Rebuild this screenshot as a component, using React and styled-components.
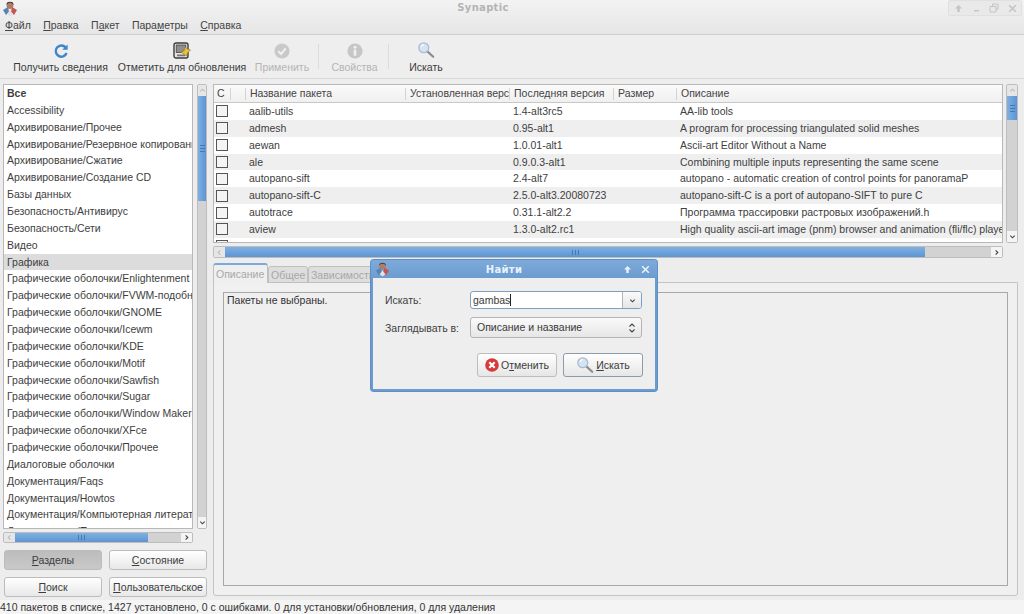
import React from "react";
import styled, { createGlobalStyle } from "styled-components";

const sections = [
  "Все", "Accessibility", "Архивирование/Прочее", "Архивирование/Резервное копирование",
  "Архивирование/Сжатие", "Архивирование/Создание CD", "Базы данных", "Безопасность/Антивирус",
  "Безопасность/Сети", "Видео", "Графика", "Графические оболочки/Enlightenment",
  "Графические оболочки/FVWM-подобные", "Графические оболочки/GNOME", "Графические оболочки/Icewm",
  "Графические оболочки/KDE", "Графические оболочки/Motif", "Графические оболочки/Sawfish",
  "Графические оболочки/Sugar", "Графические оболочки/Window Maker", "Графические оболочки/XFce",
  "Графические оболочки/Прочее", "Диалоговые оболочки", "Документация/Faqs", "Документация/Howtos",
  "Документация/Компьютерная литература", "Документация/Прочее",
];

const packages = [
  ["aalib-utils", "1.4-alt3rc5", "AA-lib tools"],
  ["admesh", "0.95-alt1", "A program for processing triangulated solid meshes"],
  ["aewan", "1.0.01-alt1", "Ascii-art Editor Without a Name"],
  ["ale", "0.9.0.3-alt1", "Combining multiple inputs representing the same scene"],
  ["autopano-sift", "2.4-alt7", "autopano - automatic creation of control points for panoramaP"],
  ["autopano-sift-C", "2.5.0-alt3.20080723", "autopano-sift-C is a port of autopano-SIFT to pure C"],
  ["autotrace", "0.31.1-alt2.2", "Программа трассировки растровых изображений.h"],
  ["aview", "1.3.0-alt2.rc1", "High quality ascii-art image (pnm) browser and animation (fli/flc) player"],
  ["", "", ""],
];

const columns = [
  { title: "С", width: 16 },
  { title: "", width: 15 },
  { title: "Название пакета", width: 160 },
  { title: "Установленная версия", width: 104 },
  { title: "Последняя версия", width: 104 },
  { title: "Размер", width: 63 },
  { title: "Описание", width: 326 },
];

const GlobalStyle = createGlobalStyle`
  html, body { margin: 0; padding: 0; background: #ededed; }
  body { font-family: "Liberation Sans", Arial, sans-serif; font-size: 10.5px; color: #3a3a3a; }
  u { text-underline-offset: 1px; }
`;

const Page = styled.div`
  width: 1024px;
  height: 614px;
  position: relative;
  display: flex;
  flex-direction: column;
  overflow: hidden;
  background: #ededed;
`;

const TitleBar = styled.div`
  height: 18px;
  flex: none;
  display: flex;
  align-items: flex-start;
  padding: 1px 2px 0 2px;
  box-sizing: border-box;
  background: linear-gradient(#f3f3f3, #ececec);
`;

const TitleText = styled.div`
  flex: 1;
  text-align: center;
  font-family: "DejaVu Sans", sans-serif;
  font-size: 10px;
  line-height: 14px;
  font-weight: 700;
  letter-spacing: 0.3px;
  color: #b4b4b4;
`;

const WinButtons = styled.div`
  display: flex;
  margin-top: -1px;
  border: 1px solid #e0e0e0;
  border-radius: 2px;
  height: 14px;
  background: #e9e9e9;
`;

const WinButton = styled.div`
  width: 18px;
  display: flex;
  align-items: center;
  justify-content: center;
  color: ${(p) => p.$color || "#c4c4c4"};
  svg { display: block; }
`;

const MenuBar = styled.div`
  height: 17px;
  box-sizing: border-box;
  flex: none;
  display: flex;
  align-items: center;
  gap: 12.4px;
  padding: 0 5px 2px;
  background: linear-gradient(#ececec, #e6e6e6);
  border-bottom: 1px solid #cfcfcf;
  color: #444;
`;

const Toolbar = styled.div`
  height: 44px;
  box-sizing: border-box;
  flex: none;
  display: flex;
  align-items: stretch;
  padding-left: 8px;
  position: relative;
  background: #eeeeee;
  border-bottom: 1px solid #d8d8d8;
`;

const Grip = styled.div`
  position: absolute;
  left: 1px;
  top: 14px;
  width: 4px;
  height: 18px;
  background-image: radial-gradient(#c4c4c4 35%, transparent 40%);
  background-size: 2px 2px;
`;

const PaneGrip = styled(Grip)`
  left: 208px;
  top: 322px;
  height: 14px;
`;

const ToolItem = styled.div`
  width: ${(p) => p.$width}px;
  display: flex;
  flex-direction: column;
  align-items: center;
  justify-content: flex-end;
  padding-bottom: 5px;
  gap: 2px;
  white-space: nowrap;
  color: ${(p) => (p.$disabled ? "#b5b5b5" : "#3c3c3c")};
  svg { display: block; }
`;

const ToolSep = styled.div`
  width: 1px;
  margin: 9px ${(p) => p.$right || 0}px 9px ${(p) => p.$left || 0}px;
  background: #dcdcdc;
`;

const Main = styled.div`
  flex: 1;
  min-height: 0;
  display: flex;
  padding: 5px 6px 4px 3px;
  gap: 6px;
  position: relative;
`;

const LeftColumn = styled.div`
  width: 204px;
  flex: none;
  display: flex;
  flex-direction: column;
`;

const ListRow = styled.div`
  display: flex;
  gap: 4px;
  height: 445px;
  flex: none;
`;

const SectionList = styled.div`
  width: 190px;
  box-sizing: border-box;
  background: #fff;
  border: 1px solid #b8b8b8;
  overflow: hidden;
`;

const SectionItem = styled.div`
  height: 16.87px;
  line-height: 16.87px;
  padding-left: 3px;
  white-space: nowrap;
  overflow: hidden;
  color: #3e3e3e;
  font-weight: ${(p) => (p.$bold ? 700 : 400)};
  background: ${(p) => (p.$selected ? "#dcdcdc" : "transparent")};
`;

const VScroll = styled.div`
  width: ${(p) => p.$width}px;
  flex: none;
  box-sizing: border-box;
  display: flex;
  flex-direction: column;
  background: #d2d2d2;
  border: 1px solid #bdbdbd;
  border-radius: 2px;
`;

const HScroll = styled.div`
  height: ${(p) => p.$height}px;
  box-sizing: border-box;
  display: flex;
  background: #d2d2d2;
  border: 1px solid #bdbdbd;
  border-radius: 2px;
  width: ${(p) => p.$width}px;
  margin-top: 3px;
  flex: none;
`;

const ScrollArrow = styled.div`
  flex: none;
  width: ${(p) => (p.$horizontal ? "11px" : "100%")};
  height: ${(p) => (p.$horizontal ? "100%" : "11px")};
  display: flex;
  align-items: center;
  justify-content: center;
  background: ${(p) => (p.$dim ? "#e6e6e6" : "#f4f4f4")};
  color: ${(p) => (p.$dim ? "#bdbdbd" : "#444")};
  svg { display: block; }
`;

const VThumb = styled.div`
  height: ${(p) => p.$size}px;
  flex: none;
  display: flex;
  align-items: center;
  justify-content: center;
  background: linear-gradient(90deg, #7fb0e2, #5d95d2);
`;

const HThumb = styled.div`
  width: ${(p) => p.$size}px;
  flex: none;
  display: flex;
  align-items: center;
  justify-content: center;
  background: linear-gradient(#7fb0e2, #5d95d2);
`;

const ThumbMark = styled.div`
  width: ${(p) => (p.$horizontal ? "7px" : "5px")};
  height: ${(p) => (p.$horizontal ? "5px" : "7px")};
  background-image: repeating-linear-gradient(
    ${(p) => (p.$horizontal ? "90deg" : "0deg")},
    #4379b4 0 1px,
    transparent 1px 3px
  );
`;

const ScrollRest = styled.div`
  flex: 1;
`;

const ButtonGrid = styled.div`
  display: grid;
  grid-template-columns: 98px 98px;
  column-gap: 7px;
  row-gap: 7px;
  margin: 7px 0 0 1px;
`;

const SideButton = styled.div`
  height: 20px;
  box-sizing: border-box;
  display: flex;
  align-items: center;
  justify-content: center;
  border: 1px solid #bcbcbc;
  border-radius: 3px;
  white-space: nowrap;
  color: #3c3c3c;
  background: ${(p) => (p.$active ? "linear-gradient(#bcbcbc, #c9c9c9)" : "linear-gradient(#fff, #e8e8e8)")};
`;

const RightColumn = styled.div`
  flex: 1;
  min-width: 0;
  display: flex;
  flex-direction: column;
`;

const TreeRow = styled.div`
  display: flex;
  gap: 3px;
  height: 159px;
  flex: none;
`;

const Tree = styled.div`
  width: 790px;
  flex: none;
  box-sizing: border-box;
  border: 1px solid #b8b8b8;
  background: #fff;
  overflow: hidden;
`;

const TreeHeader = styled.div`
  display: flex;
  height: 17px;
  border-bottom: 1px solid #c8c8c8;
  background: linear-gradient(#fafafa, #f0f0f0);
`;

const HeaderCell = styled.div`
  width: ${(p) => p.$width}px;
  flex: none;
  box-sizing: border-box;
  padding-left: 5px;
  line-height: 17px;
  white-space: nowrap;
  overflow: hidden;
  color: #444;
  background-image: linear-gradient(#d4d4d4, #d4d4d4);
  background-size: 1px 12px;
  background-position: left 3px;
  background-repeat: no-repeat;
  &:first-child { padding-left: 3px; background-image: none; }
`;

const PackageRow = styled.div`
  display: flex;
  height: 16.87px;
  line-height: 16.87px;
  background: ${(p) => (p.$odd ? "#efefef" : "#fff")};
`;

const PackageCell = styled.div`
  width: ${(p) => p.$width}px;
  flex: none;
  box-sizing: border-box;
  padding-left: 4px;
  white-space: nowrap;
  overflow: hidden;
  color: #404040;
`;

const CheckCell = styled.div`
  width: 31px;
  flex: none;
  display: flex;
  align-items: center;
  padding-left: 2px;
  box-sizing: border-box;
`;

const CheckBox = styled.div`
  width: 10px;
  height: 10px;
  border: 1px solid #555;
  background: #f4f4f4;
`;

const Tabs = styled.div`
  display: flex;
  align-items: flex-end;
  height: 20px;
  flex: none;
  margin-top: 5px;
  position: relative;
  z-index: 1;
`;

const Tab = styled.div`
  height: ${(p) => (p.$active ? 20 : 17)}px;
  width: ${(p) => p.$width}px;
  box-sizing: border-box;
  display: flex;
  align-items: center;
  padding-left: 2px;
  white-space: nowrap;
  overflow: hidden;
  color: #a8a8a8;
  background: ${(p) => (p.$active ? "#efefef" : "#dedede")};
  border: 1px solid #c0c0c0;
  border-bottom: ${(p) => (p.$active ? "none" : "1px solid #c0c0c0")};
  border-top: ${(p) => (p.$active ? "2px solid #7aa9dc" : "1px solid #c0c0c0")};
  border-radius: 3px 3px 0 0;
`;

const TabPanel = styled.div`
  flex: 1;
  min-height: 0;
  margin-top: -1px;
  padding: 9px;
  border: 1px solid #c4c4c4;
  border-radius: 0 0 3px 3px;
  background: #f0f0f0;
  display: flex;
`;

const DetailBox = styled.div`
  flex: 1;
  padding: 1px 3px;
  border: 1px solid #a8a8a8;
  background: #efefef;
  color: #333;
`;

const StatusBar = styled.div`
  height: 14px;
  flex: none;
  line-height: 14px;
  white-space: nowrap;
  background: #f4f4f4;
  color: #333;
`;

const Dialog = styled.div`
  position: absolute;
  z-index: 5;
  left: 371px;
  top: 260px;
  width: 286px;
  height: 131px;
  box-sizing: border-box;
  display: flex;
  flex-direction: column;
  border: 2px solid #6c9ccf;
  border-top: none;
  border-radius: 3px;
  background: #eeeeee;
  box-shadow: 0 0 0 1px #5f8fc4;
`;

const DialogTitle = styled.div`
  height: 18px;
  flex: none;
  display: flex;
  align-items: center;
  padding: 0 3px 0 4px;
  margin: 0 -2px;
  border-radius: 3px 3px 0 0;
  background: linear-gradient(#7eaadb, #6c9ccf);
`;

const DialogTitleText = styled.div`
  flex: 1;
  text-align: center;
  font-family: "DejaVu Sans", sans-serif;
  font-size: 10px;
  font-weight: 700;
  letter-spacing: 0.3px;
  color: #eaf2fb;
`;

const DialogBody = styled.div`
  flex: 1;
  display: flex;
  flex-direction: column;
  padding: 13px 12px 0 12px;
  background: #eeeeee;
`;

const FieldRow = styled.div`
  display: grid;
  grid-template-columns: 85px 172px;
  align-items: center;
  margin-bottom: 8px;
  color: #3e3e3e;
`;

const ComboBox = styled.div`
  height: ${(p) => (p.$focused ? 18 : 21)}px;
  box-sizing: border-box;
  display: flex;
  border: 1px solid ${(p) => (p.$focused ? "#7aa0c8" : "#b4b4b4")};
  border-radius: 3px;
  overflow: hidden;
  background: ${(p) => (p.$focused ? "#fff" : "linear-gradient(#fafafa, #e6e6e6)")};
`;

const ComboText = styled.div`
  flex: 1;
  padding-left: ${(p) => p.$pad}px;
  line-height: ${(p) => (p.$pad > 2 ? 19 : 16)}px;
  color: #3a3a3a;
`;

const Caret = styled.span`
  display: inline-block;
  width: 1px;
  height: 12px;
  vertical-align: -2px;
  background: #222;
`;

const ComboArrow = styled.div`
  width: 19px;
  flex: none;
  display: flex;
  align-items: center;
  justify-content: center;
  color: #444;
  background: ${(p) => (p.$plain ? "transparent" : "linear-gradient(#fafafa, #e6e6e6)")};
  border-left: 1px solid ${(p) => (p.$plain ? "transparent" : "#b4b4b4")};
  box-sizing: border-box;
  svg { display: block; }
`;

const DialogActions = styled.div`
  display: flex;
  justify-content: flex-end;
  gap: 6px;
  margin-top: 7px;
`;

const DialogButton = styled.div`
  height: 24px;
  width: 80px;
  box-sizing: border-box;
  display: flex;
  align-items: center;
  justify-content: center;
  gap: 2px;
  border: 1px solid ${(p) => (p.$default ? "#8d9aa8" : "#bdbdbd")};
  border-radius: 3px;
  background: linear-gradient(#fff, #e6e6e6);
  color: #3c3c3c;
  svg { display: block; }
`;

const Chevron = ({ dir = "down", size = 7 }) => {
  const points = {
    down: "1.5,3 4,5.5 6.5,3",
    up: "1.5,5 4,2.5 6.5,5",
    left: "5,1.5 2.5,4 5,6.5",
    right: "3,1.5 5.5,4 3,6.5",
  };
  return (
    <svg width={size} height={size} viewBox="0 0 8 8">
      <polyline points={points[dir]} fill="none" stroke="currentColor" strokeWidth="1.3" />
    </svg>
  );
};

const AppLogo = ({ size = 16 }) => (
  <svg width={size} height={size} viewBox="0 0 16 16">
    <circle cx="8" cy="4.5" r="3.4" fill="#b07c62" />
    <path d="M4.2 4Q8 -1 11.8 4L11 1.8Q8 -0.3 5 1.8Z" fill="#3a2a28" />
    <path d="M1 9l5-3 1 5-3 3z" fill="#5b82b5" />
    <path d="M15 9l-5-3-1 5 3 3z" fill="#c95454" />
    <path d="M5 13l3-4 3 4-3 2.5z" fill="#e2e2e2" />
  </svg>
);

const RefreshIcon = () => (
  <svg width="16" height="16" viewBox="0 0 16 16">
    <path d="M12.6 4.4A5.6 5.6 0 1 0 13.6 10" fill="none" stroke="#3f86c8" strokeWidth="2.4" />
    <path d="M14.6 1.4v5.4H9.2z" fill="#3f86c8" />
  </svg>
);

const MarkIcon = () => (
  <svg width="18" height="17" viewBox="0 0 18 17">
    <rect x="1" y="1" width="14" height="15" rx="2" fill="#e6e6e6" stroke="#3b3b3b" strokeWidth="1.4" />
    <rect x="3.2" y="3" width="9.6" height="7.5" fill="#8e8e8e" stroke="#444" strokeWidth="0.8" />
    <rect x="4" y="12.5" width="8" height="1.8" fill="#777" />
    <path d="M8 10l3-1 1-4 2.5 2 3 1-3 3-1 3-3-2z" fill="#e8c23c" stroke="#8c7320" strokeWidth="0.6" />
  </svg>
);

const ApplyIcon = () => (
  <svg width="16" height="16" viewBox="0 0 16 16">
    <circle cx="8" cy="8" r="7.6" fill="#c9c9c9" />
    <path d="M4.3 8.2l2.8 2.8 4.6-5.6" fill="none" stroke="#f1f1f1" strokeWidth="2" />
  </svg>
);

const InfoIcon = () => (
  <svg width="16" height="16" viewBox="0 0 16 16">
    <circle cx="8" cy="8" r="7.6" fill="#c6c6c6" />
    <circle cx="8" cy="4.3" r="1.5" fill="#f1f1f1" />
    <rect x="6.7" y="6.7" width="2.6" height="6" fill="#f1f1f1" />
  </svg>
);

const SearchIcon = ({ size = 18 }) => (
  <svg width={size} height={size} viewBox="0 0 20 20">
    <path d="M11.5 11.5L18 17.5" stroke="#8c8c8c" strokeWidth="2.4" strokeLinecap="round" />
    <circle cx="7.5" cy="7.5" r="5.5" fill="#d5e4f3" stroke="#a9bccf" strokeWidth="1.4" />
    <path d="M4.5 6.5a3.5 3.5 0 0 1 3-2.5" fill="none" stroke="#fff" strokeWidth="1.2" />
  </svg>
);

const CancelIcon = () => (
  <svg width="14" height="14" viewBox="0 0 14 14">
    <circle cx="7" cy="7" r="6.8" fill="#d63a3a" />
    <path d="M4.3 4.3l5.4 5.4M9.7 4.3l-5.4 5.4" stroke="#fff" strokeWidth="2.2" />
  </svg>
);

const UpArrow = () => (
  <svg width="9" height="9" viewBox="0 0 9 9">
    <path d="M4.5 1L8 4.6H5.7V8H3.3V4.6H1z" fill="currentColor" />
  </svg>
);

const MinimizeGlyph = () => (
  <svg width="9" height="9" viewBox="0 0 9 9">
    <rect x="2" y="6" width="5" height="1.4" fill="currentColor" />
  </svg>
);

const MaximizeGlyph = () => (
  <svg width="10" height="10" viewBox="0 0 10 10">
    <path d="M3.5 3V1h5.5v5H7M1 3.5h6v5.5H1z" fill="none" stroke="currentColor" />
  </svg>
);

const CloseGlyph = () => (
  <svg width="9" height="9" viewBox="0 0 9 9">
    <path d="M1.2 1.2l6.6 6.6M7.8 1.2L1.2 7.8" stroke="currentColor" strokeWidth="1.6" />
  </svg>
);

const Vertical = ({ thumb, width = 10 }) => (
  <VScroll $width={width}>
    <ScrollArrow $dim>
      <Chevron dir="up" />
    </ScrollArrow>
    <VThumb $size={thumb}>
      <ThumbMark />
    </VThumb>
    <ScrollRest />
    <ScrollArrow>
      <Chevron dir="down" />
    </ScrollArrow>
  </VScroll>
);

const Horizontal = ({ width, thumb, height = 11 }) => (
  <HScroll $width={width} $height={height}>
    <ScrollArrow $horizontal $dim>
      <Chevron dir="left" />
    </ScrollArrow>
    <HThumb $size={thumb}>
      <ThumbMark $horizontal />
    </HThumb>
    <ScrollRest />
    <ScrollArrow $horizontal>
      <Chevron dir="right" />
    </ScrollArrow>
  </HScroll>
);

export default function App() {
  return (
    <Page>
      <GlobalStyle />
      <TitleBar>
        <AppLogo />
        <TitleText>Synaptic</TitleText>
        <WinButtons>
          <WinButton><UpArrow /></WinButton>
          <WinButton><MinimizeGlyph /></WinButton>
          <WinButton><MaximizeGlyph /></WinButton>
          <WinButton><CloseGlyph /></WinButton>
        </WinButtons>
      </TitleBar>
      <MenuBar>
        <span><u>Ф</u>айл</span>
        <span><u>П</u>равка</span>
        <span>П<u>а</u>кет</span>
        <span>Пара<u>м</u>етры</span>
        <span><u>С</u>правка</span>
      </MenuBar>
      <Toolbar>
        <Grip />
        <ToolItem $width={105}>
          <RefreshIcon />
          Получить сведения
        </ToolItem>
        <ToolItem $width={138}>
          <MarkIcon />
          Отметить для обновления
        </ToolItem>
        <ToolItem $width={62} $disabled>
          <ApplyIcon />
          Применить
        </ToolItem>
        <ToolSep $left={5} $right={7} />
        <ToolItem $width={57} $disabled>
          <InfoIcon />
          Свойства
        </ToolItem>
        <ToolSep $left={5} $right={7} />
        <ToolItem $width={60}>
          <SearchIcon />
          Искать
        </ToolItem>
      </Toolbar>
      <Main>
        <PaneGrip />
        <LeftColumn>
          <ListRow>
            <SectionList>
              {sections.map((name, i) => (
                <SectionItem key={name} $bold={i === 0} $selected={name === "Графика"}>
                  {name}
                </SectionItem>
              ))}
            </SectionList>
            <Vertical thumb={105} />
          </ListRow>
          <Horizontal width={190} thumb={133} />
          <ButtonGrid>
            <SideButton $active><span><u>Р</u>азделы</span></SideButton>
            <SideButton><span><u>С</u>остояние</span></SideButton>
            <SideButton><span><u>П</u>оиск</span></SideButton>
            <SideButton><span><u>П</u>ользовательское</span></SideButton>
          </ButtonGrid>
        </LeftColumn>
        <RightColumn>
          <TreeRow>
            <Tree>
              <TreeHeader>
                {columns.map((c) => (
                  <HeaderCell key={c.width + c.title} $width={c.width}>
                    {c.title}
                  </HeaderCell>
                ))}
              </TreeHeader>
              {packages.map(([name, version, desc], i) => (
                <PackageRow key={i} $odd={i % 2 === 1}>
                  <CheckCell>
                    <CheckBox />
                  </CheckCell>
                  <PackageCell $width={160}>{name}</PackageCell>
                  <PackageCell $width={104} />
                  <PackageCell $width={104}>{version}</PackageCell>
                  <PackageCell $width={63} />
                  <PackageCell $width={327}>{desc}</PackageCell>
                </PackageRow>
              ))}
            </Tree>
            <Vertical thumb={24} width={12} />
          </TreeRow>
          <Horizontal width={790} thumb={700} height={12} />
          <Tabs>
            <Tab $active $width={55}>Описание</Tab>
            <Tab $width={40}>Общее</Tab>
            <Tab $width={100}>Зависимости</Tab>
          </Tabs>
          <TabPanel>
            <DetailBox>Пакеты не выбраны.</DetailBox>
          </TabPanel>
        </RightColumn>
      </Main>
      <StatusBar>
        410 пакетов в списке, 1427 установлено, 0 с ошибками. 0 для установки/обновления, 0 для удаления
      </StatusBar>
      <Dialog>
        <DialogTitle>
          <AppLogo size={15} />
          <DialogTitleText>Найти</DialogTitleText>
          <WinButton $color="#eaf2fb"><UpArrow /></WinButton>
          <WinButton $color="#eaf2fb"><CloseGlyph /></WinButton>
        </DialogTitle>
        <DialogBody>
          <FieldRow>
            <span>Искать:</span>
            <ComboBox $focused>
              <ComboText $pad={2}>gambas<Caret /></ComboText>
              <ComboArrow>
                <Chevron />
              </ComboArrow>
            </ComboBox>
          </FieldRow>
          <FieldRow>
            <span>Заглядывать в:</span>
            <ComboBox>
              <ComboText $pad={6}>Описание и название</ComboText>
              <ComboArrow $plain>
                <svg width="8" height="12" viewBox="0 0 8 12">
                  <polyline points="1.5,4.5 4,2 6.5,4.5" fill="none" stroke="currentColor" strokeWidth="1.1" />
                  <polyline points="1.5,7.5 4,10 6.5,7.5" fill="none" stroke="currentColor" strokeWidth="1.1" />
                </svg>
              </ComboArrow>
            </ComboBox>
          </FieldRow>
          <DialogActions>
            <DialogButton>
              <CancelIcon />
              <span>О<u>т</u>менить</span>
            </DialogButton>
            <DialogButton $default>
              <SearchIcon />
              <span><u>И</u>скать</span>
            </DialogButton>
          </DialogActions>
        </DialogBody>
      </Dialog>
    </Page>
  );
}
